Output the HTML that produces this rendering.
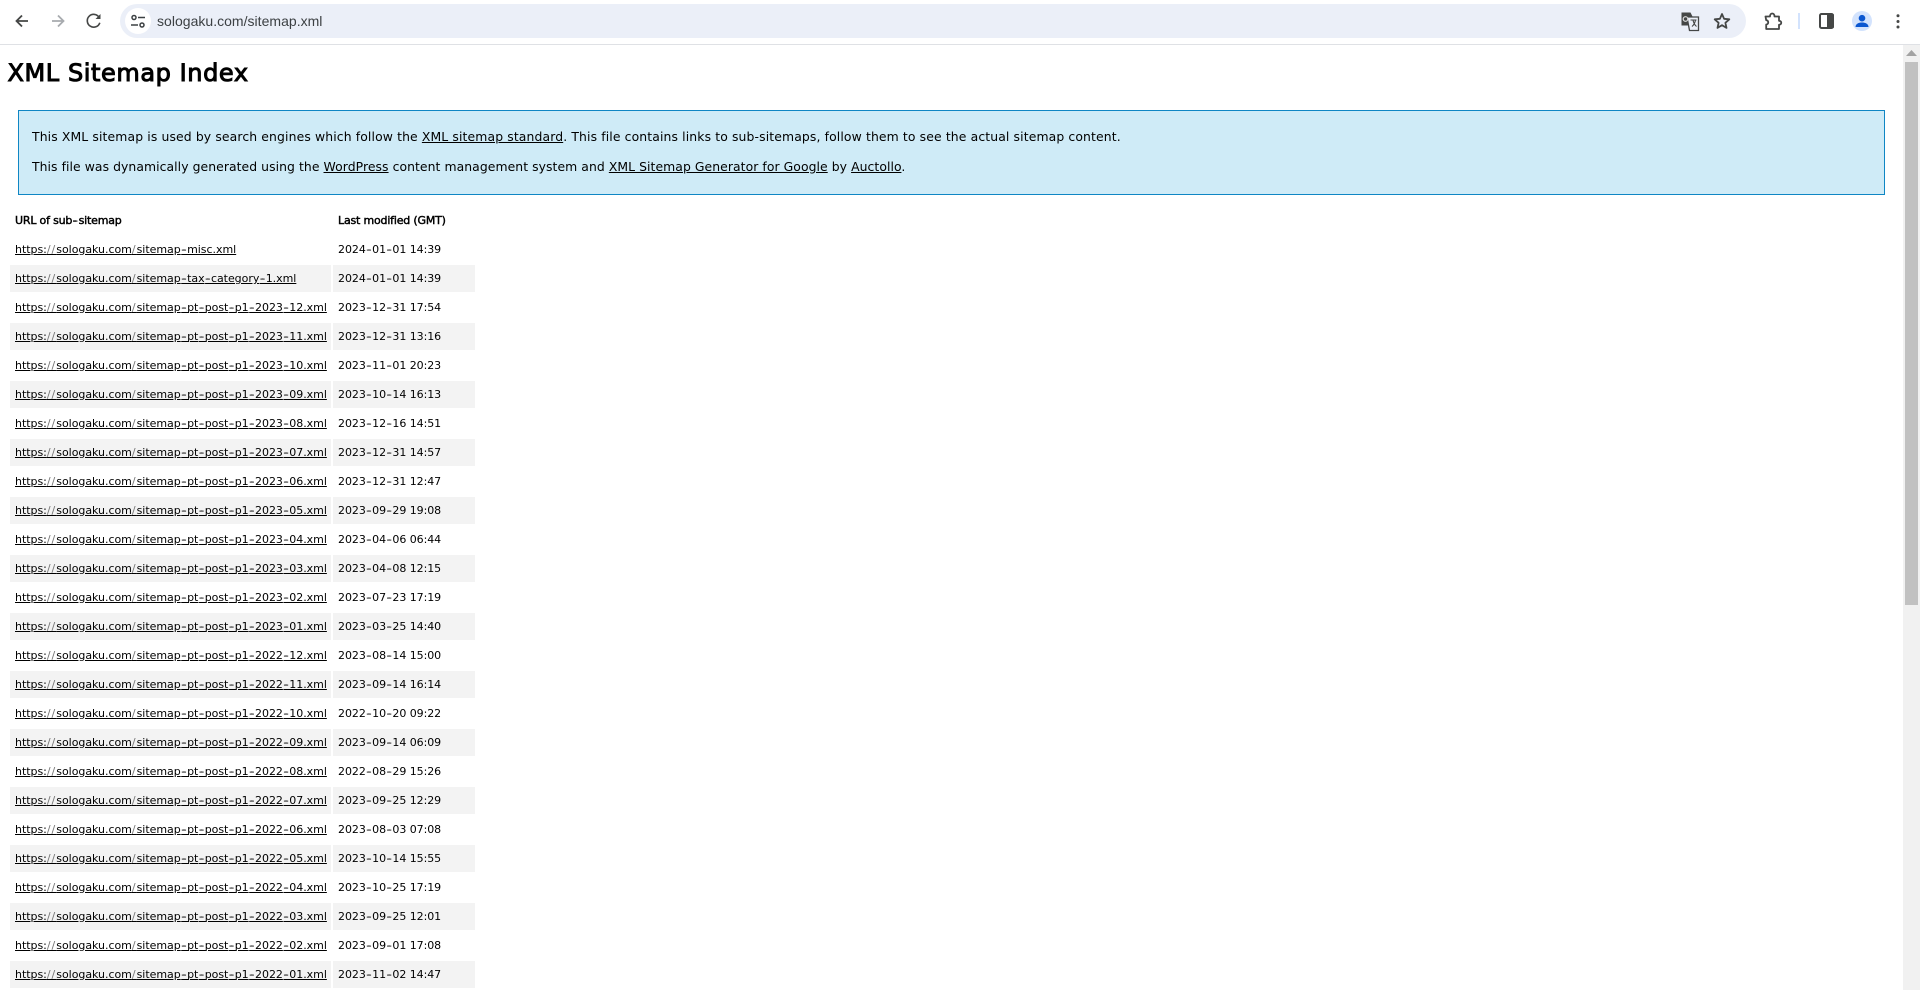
<!DOCTYPE html>
<html lang="en"><head><meta charset="utf-8"><title>XML Sitemap</title>
<style>
html,body{margin:0;padding:0;width:1920px;height:990px;overflow:hidden;background:#fff;color:#000;font-family:"DejaVu Sans",sans-serif}
a{color:#000;text-decoration:underline}
#bar{position:absolute;left:0;top:0;width:1920px;height:44px;background:#fff;border-bottom:1px solid #dfe1e5}
#omni{position:absolute;left:120px;top:4px;width:1626px;height:34px;border-radius:17px;background:#ebeff8}
#site{position:absolute;left:125px;top:8px;width:26px;height:26px;border-radius:13px;background:#fff}
#url{position:absolute;left:157px;top:12px;font:14px/18px "Liberation Sans",sans-serif;color:#3c4043;white-space:nowrap;letter-spacing:.02px}
svg{position:absolute;overflow:visible}
#sb{position:absolute;left:1903px;top:45px;width:17px;height:945px;background:#f1f1f1}
#th{position:absolute;left:2px;top:17px;width:13px;height:543px;background:#c1c1c1}
h1{position:absolute;left:7.5px;top:56px;margin:0;font-size:24px;line-height:34px;font-weight:normal;-webkit-text-stroke:1px #000;white-space:nowrap;letter-spacing:.58px}
#intro{position:absolute;left:18px;top:110px;width:1865px;height:83px;background:#cfebf7;border:1px solid #0f86c4}
#intro p{position:absolute;left:13px;margin:0;font-size:12.4px;line-height:18px;white-space:nowrap;letter-spacing:.125px}
table{position:absolute;left:8px;top:205px;border-collapse:separate;border-spacing:2px;table-layout:fixed;width:469px;font-size:11px;letter-spacing:-.03px}
th,td{box-sizing:border-box;height:27px;padding:1px 0 0 5px;text-align:left;white-space:nowrap;overflow:hidden;line-height:26px}
th{font-weight:normal;-webkit-text-stroke:.45px #000;letter-spacing:-.19px}
td+td{letter-spacing:-.06px}
i{font-style:normal;padding-left:.5px;letter-spacing:1.9px;text-shadow:1.4px 0 0 #000}
b{font-weight:normal;color:#777;letter-spacing:1px}
.a{width:321px}.b{width:142px}
tbody tr:nth-child(even) td{background:#f3f3f3}
</style></head><body>
<div id="bar">
<svg style="left:0;top:0" width="120" height="44" fill="none" stroke-width="1.8">
<path d="M28 21H17M22 15.500 16.500 21l5.500 5.500" stroke="#454746"/>
<path d="M52 21h11M58 15.500l5.500 5.500-5.500 5.500" stroke="#a8abaf"/>
<path d="M99.200 17.500a6.400 6.400 0 1 0 .6 5.200" stroke="#454746" stroke-width="1.600"/>
<path d="M100.500 14v5H95.500z" fill="#454746" stroke="none"/>
</svg>
<div id="omni"></div><div id="site"></div>
<svg style="left:125px;top:8px" width="26" height="26" fill="none" stroke="#3c4043" stroke-width="1.5">
<circle cx="9" cy="9.500" r="2"/><path d="M13 9.500h7M6 17h7"/><circle cx="17" cy="17" r="2"/>
</svg>
<div id="url">sologaku.com/sitemap.xml</div>
<svg style="left:1680px;top:11px" width="20" height="20">
<path d="M1.500 1.500h9l2 4v9h-11z" fill="#454746"/>
<path d="M7 6h11.500v13.500H9.500z" fill="#ebeff8" stroke="#454746" stroke-width="1.300"/>
<circle cx="5.500" cy="8" r="2.300" fill="none" stroke="#ddd" stroke-width="1.200"/>
<path d="M10.500 9h6M13 9c.6 3 1.700 5 3.500 6.500M15.500 9c-.5 3-1.800 5-3.500 6.500" fill="none" stroke="#454746" stroke-width="1.100"/>
</svg>
<svg style="left:1713px;top:12px" width="18" height="18">
<path d="M9 2l2.100 4.800 5.200.5-3.900 3.500 1.100 5.100L9 13.200l-4.500 2.700 1.100-5.100L1.700 7.300l5.200-.5z" fill="none" stroke="#454746" stroke-width="1.800" stroke-linejoin="round"/>
</svg>
<svg style="left:1764px;top:12px" width="20" height="20">
<path d="M1.500 4.500H6c0-4 4.500-4 4.500 0h4.500v4.300c3 0 3 4 0 4V17H2.200v-4.500c2.700 0 2.700-4.300 0-4.300z" fill="none" stroke="#454746" stroke-width="1.800" stroke-linejoin="round"/>
</svg>
<div style="position:absolute;left:1798px;top:13px;width:2px;height:16px;background:#d3e3fd"></div>
<svg style="left:1819px;top:13px" width="16" height="16">
<rect x="1" y="1" width="13" height="14" rx="1.500" fill="none" stroke="#454746" stroke-width="2"/>
<rect x="8" y="1" width="7" height="14" rx="1" fill="#454746"/>
</svg>
<svg style="left:1852px;top:11px" width="20" height="20">
<circle cx="10" cy="10" r="10" fill="#d3e3fd"/>
<circle cx="10" cy="7.200" r="3.300" fill="#0b57d0"/>
<path d="M3.500 16c0-3.400 3.500-4.500 6.500-4.500s6.500 1.100 6.500 4.500z" fill="#0b57d0"/>
</svg>
<svg style="left:1895px;top:12px" width="6" height="20" fill="#454746">
<circle cx="3" cy="3.700" r="1.500"/><circle cx="3" cy="9.500" r="1.500"/><circle cx="3" cy="15" r="1.500"/>
</svg>
</div>
<h1>XML Sitemap Index</h1>
<div id="intro">
<p style="top:17px">This XML sitemap is used by search engines which follow the <a href="#">XML sitemap standard</a>. This file contains links to sub-sitemaps, follow them to see the actual sitemap content.</p>
<p style="top:47px;letter-spacing:.065px">This file was dynamically generated using the <a href="#">WordPress</a> content management system and <a href="#">XML Sitemap Generator for Google</a> by <a href="#">Auctollo</a>.</p>
</div>
<table><colgroup><col class="a"><col class="b"></colgroup>
<thead><tr><th>URL of sub<i>-</i>sitemap</th><th>Last modified (GMT)</th></tr></thead>
<tbody>
<tr><td><a href="#">https:<b>//</b>sologaku.com<b>/</b>sitemap<i>-</i>misc.xml</a></td><td>2024<i>-</i>01<i>-</i>01 14:39</td></tr>
<tr><td><a href="#">https:<b>//</b>sologaku.com<b>/</b>sitemap<i>-</i>tax<i>-</i>category<i>-</i>1.xml</a></td><td>2024<i>-</i>01<i>-</i>01 14:39</td></tr>
<tr><td><a href="#">https:<b>//</b>sologaku.com<b>/</b>sitemap<i>-</i>pt<i>-</i>post<i>-</i>p1<i>-</i>2023<i>-</i>12.xml</a></td><td>2023<i>-</i>12<i>-</i>31 17:54</td></tr>
<tr><td><a href="#">https:<b>//</b>sologaku.com<b>/</b>sitemap<i>-</i>pt<i>-</i>post<i>-</i>p1<i>-</i>2023<i>-</i>11.xml</a></td><td>2023<i>-</i>12<i>-</i>31 13:16</td></tr>
<tr><td><a href="#">https:<b>//</b>sologaku.com<b>/</b>sitemap<i>-</i>pt<i>-</i>post<i>-</i>p1<i>-</i>2023<i>-</i>10.xml</a></td><td>2023<i>-</i>11<i>-</i>01 20:23</td></tr>
<tr><td><a href="#">https:<b>//</b>sologaku.com<b>/</b>sitemap<i>-</i>pt<i>-</i>post<i>-</i>p1<i>-</i>2023<i>-</i>09.xml</a></td><td>2023<i>-</i>10<i>-</i>14 16:13</td></tr>
<tr><td><a href="#">https:<b>//</b>sologaku.com<b>/</b>sitemap<i>-</i>pt<i>-</i>post<i>-</i>p1<i>-</i>2023<i>-</i>08.xml</a></td><td>2023<i>-</i>12<i>-</i>16 14:51</td></tr>
<tr><td><a href="#">https:<b>//</b>sologaku.com<b>/</b>sitemap<i>-</i>pt<i>-</i>post<i>-</i>p1<i>-</i>2023<i>-</i>07.xml</a></td><td>2023<i>-</i>12<i>-</i>31 14:57</td></tr>
<tr><td><a href="#">https:<b>//</b>sologaku.com<b>/</b>sitemap<i>-</i>pt<i>-</i>post<i>-</i>p1<i>-</i>2023<i>-</i>06.xml</a></td><td>2023<i>-</i>12<i>-</i>31 12:47</td></tr>
<tr><td><a href="#">https:<b>//</b>sologaku.com<b>/</b>sitemap<i>-</i>pt<i>-</i>post<i>-</i>p1<i>-</i>2023<i>-</i>05.xml</a></td><td>2023<i>-</i>09<i>-</i>29 19:08</td></tr>
<tr><td><a href="#">https:<b>//</b>sologaku.com<b>/</b>sitemap<i>-</i>pt<i>-</i>post<i>-</i>p1<i>-</i>2023<i>-</i>04.xml</a></td><td>2023<i>-</i>04<i>-</i>06 06:44</td></tr>
<tr><td><a href="#">https:<b>//</b>sologaku.com<b>/</b>sitemap<i>-</i>pt<i>-</i>post<i>-</i>p1<i>-</i>2023<i>-</i>03.xml</a></td><td>2023<i>-</i>04<i>-</i>08 12:15</td></tr>
<tr><td><a href="#">https:<b>//</b>sologaku.com<b>/</b>sitemap<i>-</i>pt<i>-</i>post<i>-</i>p1<i>-</i>2023<i>-</i>02.xml</a></td><td>2023<i>-</i>07<i>-</i>23 17:19</td></tr>
<tr><td><a href="#">https:<b>//</b>sologaku.com<b>/</b>sitemap<i>-</i>pt<i>-</i>post<i>-</i>p1<i>-</i>2023<i>-</i>01.xml</a></td><td>2023<i>-</i>03<i>-</i>25 14:40</td></tr>
<tr><td><a href="#">https:<b>//</b>sologaku.com<b>/</b>sitemap<i>-</i>pt<i>-</i>post<i>-</i>p1<i>-</i>2022<i>-</i>12.xml</a></td><td>2023<i>-</i>08<i>-</i>14 15:00</td></tr>
<tr><td><a href="#">https:<b>//</b>sologaku.com<b>/</b>sitemap<i>-</i>pt<i>-</i>post<i>-</i>p1<i>-</i>2022<i>-</i>11.xml</a></td><td>2023<i>-</i>09<i>-</i>14 16:14</td></tr>
<tr><td><a href="#">https:<b>//</b>sologaku.com<b>/</b>sitemap<i>-</i>pt<i>-</i>post<i>-</i>p1<i>-</i>2022<i>-</i>10.xml</a></td><td>2022<i>-</i>10<i>-</i>20 09:22</td></tr>
<tr><td><a href="#">https:<b>//</b>sologaku.com<b>/</b>sitemap<i>-</i>pt<i>-</i>post<i>-</i>p1<i>-</i>2022<i>-</i>09.xml</a></td><td>2023<i>-</i>09<i>-</i>14 06:09</td></tr>
<tr><td><a href="#">https:<b>//</b>sologaku.com<b>/</b>sitemap<i>-</i>pt<i>-</i>post<i>-</i>p1<i>-</i>2022<i>-</i>08.xml</a></td><td>2022<i>-</i>08<i>-</i>29 15:26</td></tr>
<tr><td><a href="#">https:<b>//</b>sologaku.com<b>/</b>sitemap<i>-</i>pt<i>-</i>post<i>-</i>p1<i>-</i>2022<i>-</i>07.xml</a></td><td>2023<i>-</i>09<i>-</i>25 12:29</td></tr>
<tr><td><a href="#">https:<b>//</b>sologaku.com<b>/</b>sitemap<i>-</i>pt<i>-</i>post<i>-</i>p1<i>-</i>2022<i>-</i>06.xml</a></td><td>2023<i>-</i>08<i>-</i>03 07:08</td></tr>
<tr><td><a href="#">https:<b>//</b>sologaku.com<b>/</b>sitemap<i>-</i>pt<i>-</i>post<i>-</i>p1<i>-</i>2022<i>-</i>05.xml</a></td><td>2023<i>-</i>10<i>-</i>14 15:55</td></tr>
<tr><td><a href="#">https:<b>//</b>sologaku.com<b>/</b>sitemap<i>-</i>pt<i>-</i>post<i>-</i>p1<i>-</i>2022<i>-</i>04.xml</a></td><td>2023<i>-</i>10<i>-</i>25 17:19</td></tr>
<tr><td><a href="#">https:<b>//</b>sologaku.com<b>/</b>sitemap<i>-</i>pt<i>-</i>post<i>-</i>p1<i>-</i>2022<i>-</i>03.xml</a></td><td>2023<i>-</i>09<i>-</i>25 12:01</td></tr>
<tr><td><a href="#">https:<b>//</b>sologaku.com<b>/</b>sitemap<i>-</i>pt<i>-</i>post<i>-</i>p1<i>-</i>2022<i>-</i>02.xml</a></td><td>2023<i>-</i>09<i>-</i>01 17:08</td></tr>
<tr><td><a href="#">https:<b>//</b>sologaku.com<b>/</b>sitemap<i>-</i>pt<i>-</i>post<i>-</i>p1<i>-</i>2022<i>-</i>01.xml</a></td><td>2023<i>-</i>11<i>-</i>02 14:47</td></tr>
</tbody></table>
<div id="sb"><svg style="left:3px;top:5px" width="11" height="6"><path d="M5.500 0 11 6H0z" fill="#a3a3a3"/></svg><div id="th"></div></div>
</body></html>
